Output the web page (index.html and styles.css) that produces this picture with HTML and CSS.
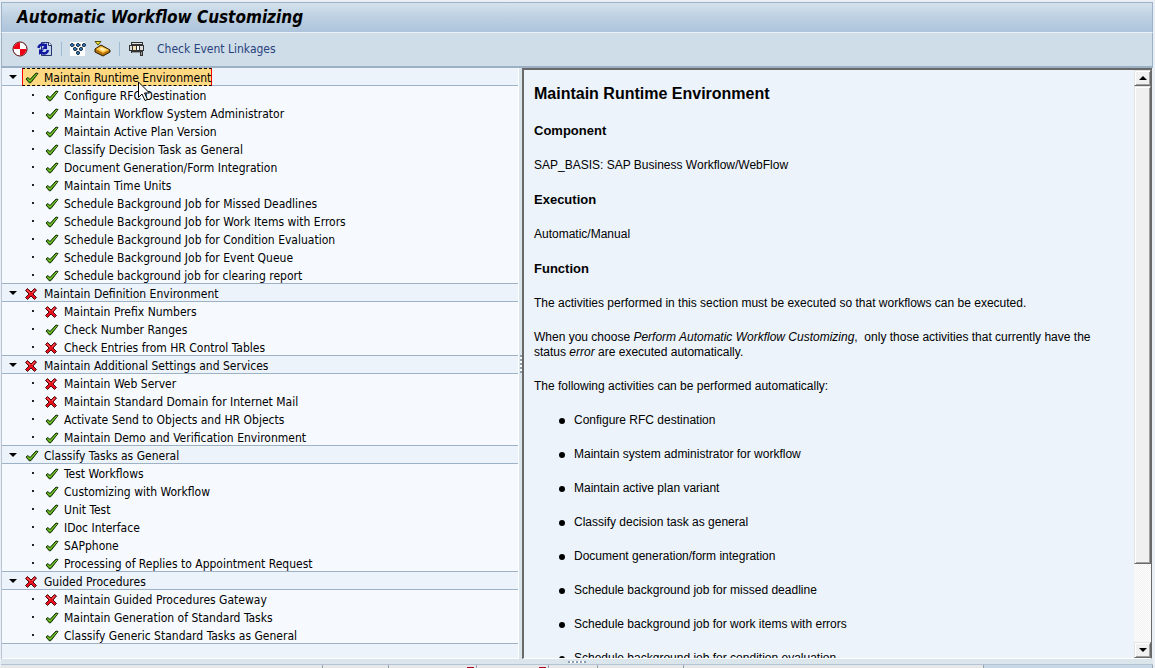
FILE: index.html
```html
<!DOCTYPE html>
<html lang="en">
<head>
<meta charset="utf-8">
<title>Automatic Workflow Customizing</title>
<link rel="stylesheet" href="styles.css">
</head>
<body>
<svg class="defs" aria-hidden="true">
  <symbol id="ok" viewBox="0 0 14 12">
    <path d="M1 7L3 5.500L5 7.500L11 1L13 1.500L6 10.500L4.500 11Z" fill="#4c9e12" stroke="#16300a" stroke-linejoin="round"/>
    <path d="M2.500 7L5 9L12 2" fill="none" stroke="#7cc828"/>
  </symbol>
  <symbol id="bad" viewBox="0 0 12 12">
    <path d="M2.500 .5L6 4L9.500 .5L11.500 2L8 6L11.500 9.500L9.500 11.500L6 8L2.500 11.500L.5 9.500L4 6L.5 2.500Z" fill="#e8101c" stroke="#4a1010" stroke-linejoin="round"/>
    <path d="M2 2L5 5M9.500 2L7 5" stroke="#ff6a70"/>
  </symbol>
</svg>
<div class="window">
  <header class="titlebar"><h1>Automatic Workflow Customizing</h1></header>
  <div class="toolbar">
    <button aria-label="Perform customizing"><svg width="16" height="16" viewBox="0 0 16 16"><circle cx="8" cy="8" r="7" fill="#fff" stroke="#500" stroke-width="1"/><path d="M8 8V1.500A6.500 6.500 0 0 0 1.500 8ZM8 8V14.500A6.500 6.500 0 0 0 14.500 8Z" fill="#f00014"/></svg></button>
    <button aria-label="Refresh"><svg width="17" height="16" viewBox="0 0 17 16"><path d="M5.500 1.500H13L15.500 4V14.500H5.500Z" fill="#c2d3ec" stroke="#29346b"/><path d="M12.500 1.500V4.500H15.500" fill="#fff" stroke="#29346b"/><path d="M2.500 7Q3 3.500 7 3.500L10 4.500M12 9Q11 12.500 8 12.500L4 11.500" fill="none" stroke="#1018a0" stroke-width="2.500"/><path d="M11 2V8H6ZM3 14V8.500H8Z" fill="#1018a0"/></svg></button>
    <span class="sep"></span>
    <button aria-label="Workflow builder"><svg width="16" height="16" viewBox="0 0 16 16"><path d="M0 1H15V15H0Z" fill="#fff"/><path d="M2 4H14M2 4L8 12L14 4M5 8H11" stroke="#333" fill="none" stroke-dasharray="1 1"/><g fill="#3d91e0" stroke="#0c2136"><circle cx="2" cy="4" r="1.500"/><circle cx="8" cy="4" r="1.500"/><circle cx="14" cy="4" r="1.500"/><circle cx="5" cy="8" r="1.500"/><circle cx="11" cy="8" r="1.500"/><circle cx="8" cy="12" r="1.500"/></g></svg></button>
    <button aria-label="Delete buffer"><svg width="17" height="16" viewBox="0 0 17 16"><path d="M1 8L7 4L16 9V11L9 15L1 11Z" fill="#b5720b" stroke="#2c1a00"/><path d="M2 8L7 5L15 9L9 12Z" fill="#ffc848"/><path d="M5 8L8 6.500L12 8.500L9 10Z" fill="#fff0b8"/><path d="M1 .5H7L4 4Z" fill="#f0e040" stroke="#555000"/></svg></button>
    <span class="sep"></span>
    <button aria-label="Event linkages"><svg width="17" height="16" viewBox="0 0 17 16" shape-rendering="crispEdges"><path d="M3 1H15V4H16V10H15V15H12V12H3V10H1V4H3Z" fill="#333"/><path d="M4 2H14V3H4ZM2 5H4V9H2ZM12 5H15V9H12Z" fill="#ddd"/><path d="M5 5H8V9H5Z" fill="#f6e0b4"/><path d="M9 5H11V9H9Z" fill="#fff"/><path d="M4 11H12V12H4ZM13 11H14V14H13Z" fill="#999"/></svg></button>
    <button class="text">Check Event Linkages</button>
  </div>
  <main class="panes">
    <nav class="tree" id="tree" aria-label="Customizing activities"></nav>
    <div class="vsplit"><i class="grip"></i></div>
    <section class="doc">
      <article>
        <h2>Maintain Runtime Environment</h2>
        <h3>Component</h3>
        <p>SAP_BASIS: SAP Business Workflow/WebFlow</p>
        <h3>Execution</h3>
        <p>Automatic/Manual</p>
        <h3>Function</h3>
        <p>The activities performed in this section must be executed so that workflows can be executed.</p>
        <p>When you choose <em>Perform Automatic Workflow Customizing</em>,&nbsp; only those activities that currently have the status <em>error</em> are executed automatically.</p>
        <p>The following activities can be performed automatically:</p>
        <ul>
          <li>Configure RFC destination</li>
          <li>Maintain system administrator for workflow</li>
          <li>Maintain active plan variant</li>
          <li>Classify decision task as general</li>
          <li>Document generation/form integration</li>
          <li>Schedule background job for missed deadline</li>
          <li>Schedule background job for work items with errors</li>
          <li>Schedule background job for condition evaluation</li>
        </ul>
      </article>
      <div class="scroll">
        <button aria-label="Scroll up"><svg width="8" height="4" viewBox="0 0 8 4"><path d="M0 4L4 0L8 4Z"/></svg></button>
        <div class="track"><div class="thumb"></div></div>
        <button aria-label="Scroll down"><svg width="8" height="4" viewBox="0 0 8 4"><path d="M0 0L4 4L8 0Z"/></svg></button>
      </div>
    </section>
  </main>
  <div class="hsplit"><i class="grip"></i></div>
  <div class="grid"><span></span><span></span><span class="mark"></span><span class="mark"></span><span></span><span></span><span></span><span class="end"></span></div>
</div>
<svg class="pointer" width="13" height="21" viewBox="0 0 13 21"><path d="M.5 1V16.500L4 13L7 19.500L9.500 18.500L6.500 12H11.500Z" fill="#fff" stroke="#000"/></svg>
<script src="tree.js"></script>
</body>
</html>
```
FILE: styles.css
```css
* { box-sizing: border-box; }
body { margin: 0; height: 100vh; overflow: hidden; background: #e9eff5; color: #000; font: 12px/18px "DejaVu Sans Condensed", "DejaVu Sans", sans-serif; }
button { padding: 0; border: 0; background: none; font: inherit; color: inherit; display: flex; }
.defs { display: none; }
.window { height: 100vh; display: flex; flex-direction: column; padding: 2px 2px 0 1px; }
.titlebar { border: 1px solid #9bb2c8; border-bottom-color: #eaf2f9; height: 31px; flex: none; padding: 0 0 2px 15px; background: linear-gradient(#d4e2ee, #bdd0e1 50%, #adc4dc); display: flex; align-items: center; }
h1 { margin: 0; font: italic bold 17px/24px "DejaVu Sans Condensed", "DejaVu Sans", sans-serif; }
.toolbar { height: 35px; flex: none; display: flex; align-items: center; gap: 8px; padding: 0 0 2px 10px; background: #cfdde8; border: solid #9bb0c4; border-width: 0 1px 2px; }
.sep { width: 1px; height: 14px; background: #9db9d4; }
.text { color: #27427c; margin-left: 4px; }
.panes { flex: 1; min-height: 0; display: flex; border-left: 1px solid #b8c4d4; padding-right: 1px; }
.tree { flex: 0 0 517px; background: #ecf3fb; border-right: 1px solid #fff; border-bottom: 1px solid #fff; }
.tree ul { list-style: none; margin: 0; padding: 0; border-bottom: 1px solid #9db2c6; background: #f6faff; }
.row { display: flex; align-items: flex-start; height: 18px; }
.tree li:last-child .row { height: 17px; }
.head { border-bottom: 1px solid #9db2c6; padding-left: 7px; }
.head::before { content: ""; border: 4px solid transparent; border-top-color: #000; border-bottom: 0; margin: 7px 5px 0 0; }
.tree li .row::before { content: ""; width: 2px; height: 2px; background: #222; margin: 8px 8px 0 30px; }
.label { display: flex; align-items: center; gap: 5px; height: 18px; padding: 1px 0 0 2px; border: 1px solid transparent; white-space: nowrap; }
.row svg { width: 14px; height: 12px; }
.row svg.bad { width: 12px; height: 12px; margin-right: 2px; }
.selected { background: #ffd981; border: 1px dashed #000; border-left: 1px solid #f00; border-right: 1px solid #f00; }
.vsplit { width: 3px; flex: none; background: #dbe6ec; display: flex; align-items: center; justify-content: center; }
.grip { width: 2px; height: 18px; background: repeating-linear-gradient(#8d9eb0 0 2px, #fff 2px 4px); }
.doc { flex: 1; min-width: 0; display: flex; border: solid #696969; border-width: 2px 1px 0 2px; background: #ecf3fb; border-bottom: 1px solid #fff; overflow: hidden; font: 12px/15px "Liberation Sans", Arial, sans-serif; }
article { flex: 1; min-width: 0; padding: 0 30px 0 10px; }
h2 { font-size: 16px; line-height: 20px; margin: 14px 0 19px; }
h3 { font-size: 13px; line-height: 16px; margin: 0 0 19px; }
p { margin: 0 0 19px; }
.doc ul { margin: 0; padding-left: 25px; list-style: none; }
.doc li { display: flex; align-items: center; gap: 9px; margin-bottom: 19px; }
.doc li::before { content: ""; width: 6px; height: 6px; border-radius: 50%; background: #000; }
.scroll { width: 17px; flex: none; display: flex; flex-direction: column; }
.scroll button, .thumb { border: 1px solid; border-color: #e3e3e3 #696969 #696969 #e3e3e3; box-shadow: inset 1px 1px #fff, inset -1px -1px #a0a0a0; background: #f0f0f0; }
.scroll button { height: 16px; align-items: center; justify-content: center; }
.track { flex: 1; background: repeating-conic-gradient(#f0f0f0 0 25%, #fff 0 50%) 0 0 / 2px 2px; }
.thumb { height: 86%; }
.hsplit { height: 5px; flex: none; background: #dbe6ec; display: flex; align-items: center; justify-content: center; }
.hsplit .grip { width: 18px; height: 2px; background: repeating-linear-gradient(90deg, #8d9eb0 0 2px, #fff 2px 4px); }
.grid { height: 4px; flex: none; display: grid; grid-template-columns: 322fr 66fr 88fr 72fr 49fr 86fr 300fr 169fr; border-top: 1px solid #b4c3d1; background: #c9d8e7; }
.grid span { display: flex; align-items: flex-end; justify-content: flex-end; padding-right: 2px; background: #e6e8ea; border-right: 1px solid #9aa5b0; }
.grid .mark::after { content: ""; width: 7px; height: 1px; background: #b00020; }
.grid .end { background: #c9d8e7; }
.pointer { position: absolute; left: 138px; top: 81px; }
```
FILE: tree.js
```js
const groups = [
  ["Maintain Runtime Environment", 1, [["Configure RFC Destination", 1], ["Maintain Workflow System Administrator", 1], ["Maintain Active Plan Version", 1], ["Classify Decision Task as General", 1], ["Document Generation/Form Integration", 1], ["Maintain Time Units", 1], ["Schedule Background Job for Missed Deadlines", 1], ["Schedule Background Job for Work Items with Errors", 1], ["Schedule Background Job for Condition Evaluation", 1], ["Schedule Background Job for Event Queue", 1], ["Schedule background job for clearing report", 1]]],
  ["Maintain Definition Environment", 0, [["Maintain Prefix Numbers", 0], ["Check Number Ranges", 1], ["Check Entries from HR Control Tables", 0]]],
  ["Maintain Additional Settings and Services", 0, [["Maintain Web Server", 0], ["Maintain Standard Domain for Internet Mail", 0], ["Activate Send to Objects and HR Objects", 1], ["Maintain Demo and Verification Environment", 1]]],
  ["Classify Tasks as General", 1, [["Test Workflows", 1], ["Customizing with Workflow", 1], ["Unit Test", 1], ["IDoc Interface", 1], ["SAPphone", 1], ["Processing of Replies to Appointment Request", 1]]],
  ["Guided Procedures", 0, [["Maintain Guided Procedures Gateway", 0], ["Maintain Generation of Standard Tasks", 1], ["Classify Generic Standard Tasks as General", 1]]]
];
const label = (text, ok, cls = "") => `<span class="label ${cls}"><svg class="${ok ? "ok" : "bad"}"><use href="#${ok ? "ok" : "bad"}"/></svg>${text}</span>`;
document.getElementById("tree").innerHTML = groups.map(([name, ok, items], i) =>
  `<div class="row head">${label(name, ok, i ? "" : "selected")}</div><ul>${items.map(([t, s]) => `<li><div class="row">${label(t, s)}</div></li>`).join("")}</ul>`).join("");
```
